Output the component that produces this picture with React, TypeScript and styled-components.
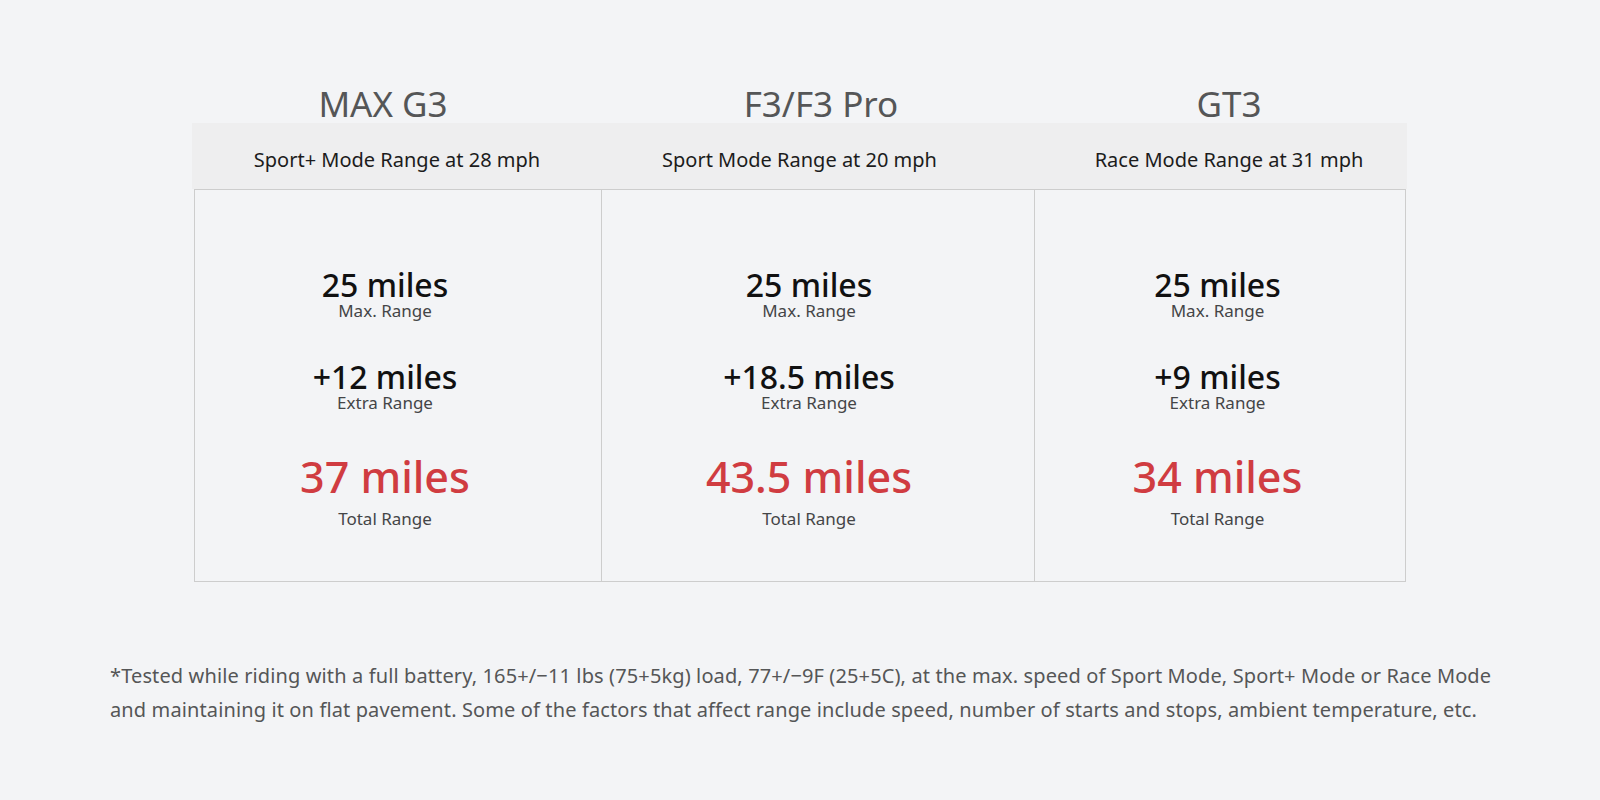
import React from "react";
import styled, { createGlobalStyle, css } from "styled-components";

const GlobalStyle = createGlobalStyle`
  html, body {
    margin: 0;
    padding: 0;
    background: #f3f4f6;
  }
  body {
    font-family: "Noto Sans", "Open Sans", sans-serif;
    -webkit-font-smoothing: antialiased;
  }
`;

const COLS = "406px 433px 373px";

const shiftCss = (shift: number) =>
  shift >= 0
    ? css`padding-left: ${shift * 2}px;`
    : css`padding-right: ${-shift * 2}px;`;

const Page = styled.div`
  width: 1600px;
  height: 800px;
  padding-top: 84px;
  box-sizing: border-box;
  display: flex;
  flex-direction: column;
`;

const Comparison = styled.section`
  margin-left: 194px;
  width: 1212px;
  display: flex;
  flex-direction: column;
`;

const TitleRow = styled.div`
  display: grid;
  grid-template-columns: ${COLS};
  height: 39px;
`;

const Title = styled.h2<{ $shift: number }>`
  margin: 0;
  font-size: 35px;
  line-height: 40px;
  font-weight: 400;
  color: #555657;
  text-align: center;
  white-space: nowrap;
  ${(p) => shiftCss(p.$shift)}
`;

const ModeBand = styled.div`
  display: grid;
  grid-template-columns: ${COLS};
  margin: 0 -1px 0 -2px;
  padding: 25px 1px 17px 2px;
  background: #eeeeef;
`;

const ModeLabel = styled.div<{ $shift: number }>`
  font-size: 20px;
  line-height: 24px;
  color: #1c1c1c;
  text-align: center;
  white-space: nowrap;
  ${(p) => shiftCss(p.$shift)}
`;

const Body = styled.div`
  display: grid;
  grid-template-columns: ${COLS};
  height: 393px;
  border: 1px solid #cdcdcd;
  box-sizing: border-box;
`;

const Column = styled.div<{ $shift: number; $divider: boolean }>`
  display: flex;
  flex-direction: column;
  align-items: center;
  gap: 40px;
  padding-top: 79px;
  ${(p) => p.$divider && css`border-left: 1px solid #cdcdcd;`}
  ${(p) => shiftCss(p.$shift)}
`;

const Stat = styled.div`
  display: flex;
  flex-direction: column;
  align-items: center;
`;

const Value = styled.div<{ $total?: boolean }>`
  font-size: 32px;
  line-height: 32px;
  font-weight: 500;
  color: #111111;
  white-space: nowrap;
  ${(p) =>
    p.$total &&
    css`
      font-size: 43px;
      line-height: 48px;
      color: #d03c41;
      margin-bottom: 8px;
    `}
`;

const Label = styled.div`
  font-size: 17px;
  line-height: 20px;
  color: #444547;
  white-space: nowrap;
`;

const Footnote = styled.p`
  margin: 77px 0 0 110px;
  width: 1410px;
  font-size: 20px;
  line-height: 34px;
  letter-spacing: 0.12px;
  color: #555657;
`;

type Model = {
  name: string;
  titleShift: number;
  mode: string;
  modeShift: number;
  bodyShift: number;
  extra: string;
  total: string;
};

const models: Model[] = [
  {
    name: "MAX G3",
    titleShift: -14,
    mode: "Sport+ Mode Range at 28 mph",
    modeShift: 0,
    bodyShift: -13,
    extra: "+12 miles",
    total: "37 miles",
  },
  {
    name: "F3/F3 Pro",
    titleShift: 4.5,
    mode: "Sport Mode Range at 20 mph",
    modeShift: -17,
    bodyShift: -9,
    extra: "+18.5 miles",
    total: "43.5 miles",
  },
  {
    name: "GT3",
    titleShift: 9.5,
    mode: "Race Mode Range at 31 mph",
    modeShift: 9.5,
    bodyShift: -3.5,
    extra: "+9 miles",
    total: "34 miles",
  },
];

export default function App() {
  return (
    <>
      <GlobalStyle />
      <Page>
        <Comparison>
          <TitleRow>
            {models.map((m) => (
              <Title key={m.name} $shift={m.titleShift}>
                {m.name}
              </Title>
            ))}
          </TitleRow>
          <ModeBand>
            {models.map((m) => (
              <ModeLabel key={m.name} $shift={m.modeShift}>
                {m.mode}
              </ModeLabel>
            ))}
          </ModeBand>
          <Body>
            {models.map((m, i) => (
              <Column key={m.name} $shift={m.bodyShift} $divider={i > 0}>
                <Stat>
                  <Value>25 miles</Value>
                  <Label>Max. Range</Label>
                </Stat>
                <Stat>
                  <Value>{m.extra}</Value>
                  <Label>Extra Range</Label>
                </Stat>
                <Stat>
                  <Value $total>{m.total}</Value>
                  <Label>Total Range</Label>
                </Stat>
              </Column>
            ))}
          </Body>
        </Comparison>
        <Footnote>
          *Tested while riding with a full battery, 165+/−11 lbs (75+5kg) load,
          77+/−9F (25+5C), at the max. speed of Sport Mode, Sport+ Mode or Race
          Mode and maintaining it on flat pavement. Some of the factors that
          affect range include speed, number of starts and stops, ambient
          temperature, etc.
        </Footnote>
      </Page>
    </>
  );
}
